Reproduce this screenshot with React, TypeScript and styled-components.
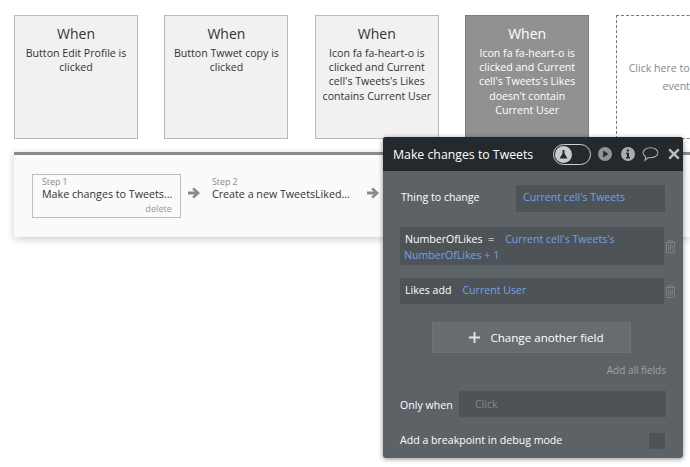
import React from "react";
import styled, { createGlobalStyle } from "styled-components";

const Global = createGlobalStyle`
  html, body { margin: 0; padding: 0; background: #fff; }
  body { font-family: "Open Sans", "Liberation Sans", sans-serif; color: #333; }
`;

const Page = styled.div`
  position: relative;
  width: 690px;
  height: 467px;
  overflow: hidden;
  background: #fff;
`;

const CardRow = styled.div`
  display: flex;
  gap: 26.4px;
  padding: 15px 0 0 14px;
  width: 900px;
`;

const Card = styled.div<{ $active?: boolean }>`
  box-sizing: border-box;
  flex: none;
  width: 124px;
  height: 124px;
  padding: 8px 8px 0;
  text-align: center;
  background: ${(p) => (p.$active ? "#919191" : "#f1f1f1")};
  border: 1px solid ${(p) => (p.$active ? "#7f7f7f" : "#b9b9b9")};
  color: ${(p) => (p.$active ? "#fff" : "#333")};
`;

const CardTitle = styled.div`
  font-size: 14px;
  line-height: 19px;
  margin-bottom: 3px;
`;

const CardText = styled.div`
  font-size: 10.6px;
  line-height: 14.2px;
  margin: 0 -3px;
`;

const AddCard = styled.div`
  box-sizing: border-box;
  flex: none;
  width: 124px;
  height: 124px;
  border: 1px dashed #777;
  display: flex;
  align-items: center;
  justify-content: center;
  text-align: center;
  font-size: 10.6px;
  line-height: 18px;
  color: #888;
  padding: 0 8px;
`;

const Strip = styled.div`
  box-sizing: border-box;
  margin: 13px 0 0 14px;
  height: 85px;
  border-top: 3px solid #8b8b8b;
  background: #fafafa;
  box-shadow: 0 2px 8px rgba(0, 0, 0, 0.2);
  display: flex;
  align-items: flex-start;
  padding: 19px 0 0 18px;
`;

const Step = styled.div<{ $selected?: boolean }>`
  box-sizing: border-box;
  flex: none;
  width: 149px;
  height: 44px;
  padding: 1px 8px 0 9px;
  border: 1px solid ${(p) => (p.$selected ? "#bdbdbd" : "transparent")};
`;

const StepLabel = styled.div`
  font-size: 8.8px;
  line-height: 12px;
  color: #8a8a8a;
`;

const StepName = styled.div`
  font-size: 10.7px;
  line-height: 12px;
  white-space: nowrap;
  color: #333;
`;

const StepDelete = styled.div`
  font-size: 9.2px;
  line-height: 14px;
  color: #999;
  text-align: right;
  margin-top: 2px;
`;

const StepArrow = styled.svg<{ $left: number }>`
  flex: none;
  width: 14px;
  height: 14px;
  margin: 12px 1px 0 ${(p) => p.$left}px;
`;

const Modal = styled.div`
  position: absolute;
  left: 383px;
  top: 137px;
  width: 300px;
  height: 321px;
  border-radius: 3px;
  overflow: hidden;
  background: #5d6266;
  box-shadow: 0 1px 5px rgba(0, 0, 0, 0.45);
  color: #fff;
`;

const ModalHeader = styled.div`
  display: flex;
  align-items: center;
  height: 34px;
  padding: 0 3px 0 10px;
  background: #23292c;
`;

const ModalTitle = styled.div`
  width: 141px;
  font-size: 12.3px;
  white-space: nowrap;
  overflow: hidden;
`;

const Toggle = styled.div`
  box-sizing: border-box;
  flex: none;
  width: 38px;
  height: 21px;
  margin-left: 20px;
  border: 1px solid #cfd2d3;
  border-radius: 11px;
  padding: 0 0 0 1px;
  display: flex;
  align-items: center;
`;

const ToggleKnob = styled.div`
  width: 17px;
  height: 17px;
  border-radius: 50%;
  background: #c9cccd;
  display: flex;
  align-items: center;
  justify-content: center;
`;

const HeaderIcon = styled.svg<{ $w: number; $h: number; $left: number }>`
  flex: none;
  width: ${(p) => p.$w}px;
  height: ${(p) => p.$h}px;
  margin-left: ${(p) => p.$left}px;
`;

const ModalBody = styled.div`
  padding: 14px 18px 0 17px;
`;

const ThingRow = styled.div`
  display: flex;
  align-items: center;
  justify-content: space-between;
  height: 27px;
  line-height: 25px;
`;

const Label = styled.span`
  font-size: 10.6px;
  line-height: 14px;
  color: #fff;
`;

const ThingLabel = styled(Label)`
  line-height: 25px;
  margin-bottom: 2px;
  padding-left: 1px;
`;

const OnlyLabel = styled(Label)`
  line-height: 16px;
  padding-top: 2px;
`;

const ValueField = styled.div`
  box-sizing: border-box;
  width: 149px;
  height: 27px;
  line-height: 25px;
  padding-left: 7px;
  background: #4e5358;
  font-size: 10.6px;
  color: #6ea2e8;
`;

const Blue = styled.span`
  color: #6ea2e8;
`;

const FieldRow = styled.div<{ $top: number }>`
  display: flex;
  align-items: center;
  margin-top: ${(p) => p.$top}px;
  margin-right: -12px;
`;

const FieldBox = styled.div<{ $tall?: boolean }>`
  box-sizing: border-box;
  flex: none;
  width: 264px;
  height: ${(p) => (p.$tall ? 38 : 26)}px;
  padding: ${(p) => (p.$tall ? "4px 4px 0" : "0 5px")};
  line-height: ${(p) => (p.$tall ? "16px" : "25px")};
  text-indent: ${(p) => (p.$tall ? "1px" : "0")};
  background: #4e5358;
  font-size: 10.6px;
  white-space: pre-wrap;
`;

const Trash = styled.svg`
  flex: none;
  width: 11px;
  height: 13px;
  margin-left: 1px;
`;

const AddButton = styled.div`
  box-sizing: border-box;
  display: flex;
  align-items: center;
  justify-content: center;
  gap: 9px;
  width: 199px;
  height: 31px;
  margin: 18px 0 0 32px;
  padding-left: 9px;
  background: #676c70;
  border: 1px solid #6e7377;
  font-size: 11.6px;
`;

const AddAll = styled.div`
  margin-top: 9px;
  height: 16px;
  line-height: 16px;
  text-align: right;
  margin-right: -1px;
  font-size: 10px;
  color: #9ea2a5;
`;

const OnlyRow = styled.div`
  display: flex;
  align-items: center;
  justify-content: space-between;
  margin: 13px -1px 0 0;
`;

const OnlyField = styled.div`
  box-sizing: border-box;
  width: 207px;
  height: 26px;
  line-height: 27px;
  padding-left: 16px;
  background: #4e5358;
  font-size: 10.5px;
  color: #82868a;
`;

const BreakRow = styled.div`
  display: flex;
  align-items: flex-start;
  justify-content: space-between;
  margin-top: 16px;
`;

const Check = styled.div`
  width: 16px;
  height: 16px;
  background: #4e5358;
`;

const TrashIcon = () => (
  <Trash viewBox="0 0 11 13" fill="none" stroke="#7b8084" strokeWidth="1">
    <path d="M0.5 2.500h10M3.500 2.500V0.800h4v1.700M1.500 2.500v10h8v-10M3.700 4.500v6M5.500 4.500v6M7.300 4.500v6" />
  </Trash>
);

const ARROW = "M7 1.500 13 7l-6 5.500-1.800-1.800 2.400-2.200H1v-3h6.600L5.200 3.300z";

export default function App() {
  return (
    <Page>
      <Global />
      <CardRow>
        <Card>
          <CardTitle>When</CardTitle>
          <CardText>Button Edit Profile is clicked</CardText>
        </Card>
        <Card>
          <CardTitle>When</CardTitle>
          <CardText>Button Twwet copy is clicked</CardText>
        </Card>
        <Card>
          <CardTitle>When</CardTitle>
          <CardText>Icon fa fa-heart-o is clicked and Current cell's Tweets's Likes contains Current User</CardText>
        </Card>
        <Card $active>
          <CardTitle>When</CardTitle>
          <CardText>Icon fa fa-heart-o is clicked and Current cell's Tweets's Likes doesn't contain Current User</CardText>
        </Card>
        <AddCard>Click here to add an event.</AddCard>
      </CardRow>
      <Strip>
        <Step $selected>
          <StepLabel>Step 1</StepLabel>
          <StepName>Make changes to Tweets...</StepName>
          <StepDelete>delete</StepDelete>
        </Step>
        <StepArrow $left={6} viewBox="0 0 14 14">
          <path d={ARROW} fill="#8a8a8a" />
        </StepArrow>
        <Step>
          <StepLabel>Step 2</StepLabel>
          <StepName>Create a new TweetsLiked...</StepName>
        </Step>
        <StepArrow $left={15} viewBox="0 0 14 14">
          <path d={ARROW} fill="#8a8a8a" />
        </StepArrow>
      </Strip>
      <Modal>
        <ModalHeader>
          <ModalTitle>Make changes to Tweets</ModalTitle>
          <Toggle>
            <ToggleKnob>
              <svg width="11" height="11" viewBox="0 0 11 11">
                <path d="M4.500 1h2v3.500L9.500 9.500h-8l3-5z" fill="#23292c" />
              </svg>
            </ToggleKnob>
          </Toggle>
          <HeaderIcon $w={14} $h={14} $left={7} viewBox="0 0 14 14">
            <circle cx="7" cy="7" r="7" fill="#8d9396" />
            <path d="M5.200 3.500 10.500 7l-5.300 3.500z" fill="#23292c" />
          </HeaderIcon>
          <HeaderIcon $w={14} $h={14} $left={9} viewBox="0 0 14 14">
            <circle cx="7" cy="7" r="7" fill="#a9adaf" />
            <path d="M5.800 2.500h2.200v2H5.800zM5 5.800h3v4.200h1v1.500H5V10h1V7.200H5z" fill="#23292c" />
          </HeaderIcon>
          <HeaderIcon $w={17} $h={16} $left={7} viewBox="0 0 16 14" preserveAspectRatio="none">
            <path d="M8 1.500c3.900 0 7 1.900 7 4.400s-3.100 4.400-7 4.400c-.8 0-1.500-.1-2.200-.2L2.800 12.500l.6-3.200C1.900 8.500 1 7.300 1 5.900 1 3.400 4.100 1.500 8 1.500z" fill="none" stroke="#a9adaf" strokeWidth="1" />
          </HeaderIcon>
          <HeaderIcon $w={12} $h={12} $left={9} viewBox="0 0 12 12">
            <path d="M2 .5 6 4.200 10 .5l1.600 1.700L7.800 6l3.800 3.800L10 11.500 6 7.800 2 11.500.4 9.800 4.200 6 .4 2.200z" fill="#b9bcbe" />
          </HeaderIcon>
        </ModalHeader>
        <ModalBody>
          <ThingRow>
            <ThingLabel>Thing to change</ThingLabel>
            <ValueField>Current cell's Tweets</ValueField>
          </ThingRow>
          <FieldRow $top={15}>
            <FieldBox $tall>
              NumberOfLikes  =    <Blue>Current cell's Tweets's NumberOfLikes + 1</Blue>
            </FieldBox>
            <TrashIcon />
          </FieldRow>
          <FieldRow $top={13}>
            <FieldBox>
              Likes add    <Blue>Current User</Blue>
            </FieldBox>
            <TrashIcon />
          </FieldRow>
          <AddButton>
            <svg width="13" height="13" viewBox="0 0 14 14">
              <path d="M6 1h2v5h5v2H8v5H6V8H1V6h5z" fill="#e4e5e6" />
            </svg>
            Change another field
          </AddButton>
          <AddAll>Add all fields</AddAll>
          <OnlyRow>
            <OnlyLabel>Only when</OnlyLabel>
            <OnlyField>Click</OnlyField>
          </OnlyRow>
          <BreakRow>
            <Label>Add a breakpoint in debug mode</Label>
            <Check />
          </BreakRow>
        </ModalBody>
      </Modal>
    </Page>
  );
}
